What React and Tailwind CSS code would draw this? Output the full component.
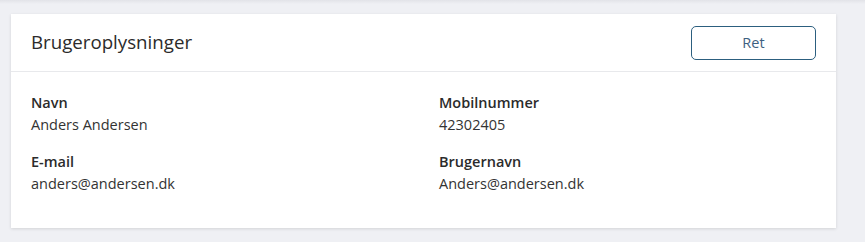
import React from "react";

function Field({ label, value }) {
  return (
    <div className="flex flex-col">
      <div className="text-[14.5px] leading-[22px] font-semibold text-[#2b2b2b]">{label}</div>
      <div className="text-[14.5px] leading-[22px] text-[#333333]">{value}</div>
    </div>
  );
}

export default function App() {
  return (
    <div
      className="w-[865px] h-[242px] bg-[#eff0f4] pt-[14px] pl-[11px] relative"
      style={{ fontFamily: '"Open Sans", "Noto Sans", sans-serif' }}
    >
      <div className="absolute top-0 left-0 right-0 h-[4px] bg-gradient-to-b from-[#e2e3e8] to-[#eff0f4]" />
      <div className="relative w-[825px] bg-white shadow-[0_1px_3px_rgba(0,0,0,0.12)]">
        <div className="h-[58px] flex items-center justify-between pl-[20px] pr-[20px] border-b border-[#e8e9ec]">
          <h2 className="text-[18.7px] font-normal text-[#2b2b2b] leading-none mt-[-1px]">Brugeroplysninger</h2>
          <button className="w-[125px] h-[34px] border border-[#2c5f7f] rounded-[5px] text-[14.5px] text-[#3d6080] bg-white">
            Ret
          </button>
        </div>
        <div className="grid grid-cols-2 gap-x-[31px] gap-y-[15px] pl-[20px] pr-[20px] pt-[20px] pb-[33px]">
          <Field label="Navn" value="Anders Andersen" />
          <Field label="Mobilnummer" value="42302405" />
          <Field label="E-mail" value="anders@andersen.dk" />
          <Field label="Brugernavn" value="Anders@andersen.dk" />
        </div>
      </div>
    </div>
  );
}
